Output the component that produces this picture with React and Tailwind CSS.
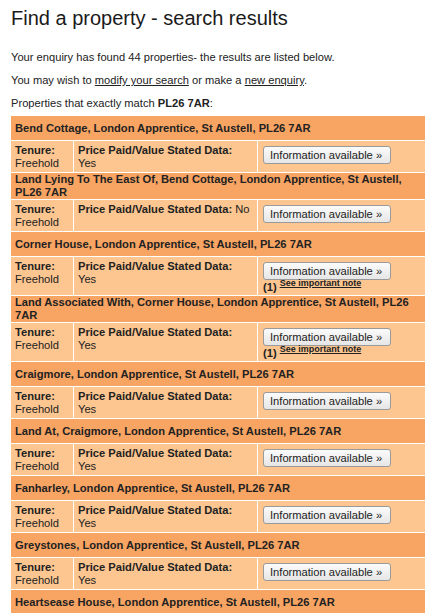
import React from 'react';

const results = [
  { address: 'Bend Cottage, London Apprentice, St Austell, PL26 7AR', price: 'Yes' },
  { address: 'Land Lying To The East Of, Bend Cottage, London Apprentice, St Austell, PL26 7AR', price: 'No', inline: true },
  { address: 'Corner House, London Apprentice, St Austell, PL26 7AR', price: 'Yes', note: true },
  { address: 'Land Associated With, Corner House, London Apprentice, St Austell, PL26 7AR', price: 'Yes', note: true },
  { address: 'Craigmore, London Apprentice, St Austell, PL26 7AR', price: 'Yes' },
  { address: 'Land At, Craigmore, London Apprentice, St Austell, PL26 7AR', price: 'Yes' },
  { address: 'Fanharley, London Apprentice, St Austell, PL26 7AR', price: 'Yes' },
  { address: 'Greystones, London Apprentice, St Austell, PL26 7AR', price: 'Yes' },
  { address: 'Heartsease House, London Apprentice, St Austell, PL26 7AR', price: 'Yes' },
];

const ResultRow = ({ item, last }) => (
  <>
    {/* Address header */}
    <div className="bg-[#f8a462] min-h-[24px] flex items-center pl-[4px] pr-[5px] font-bold leading-[13px]">
      <span>{item.address}</span>
    </div>
    {!last && (
      <div className="flex gap-px">
        <div className="w-[62px] shrink-0 bg-[#fdc58f] pl-[4px] pt-[3px] pb-[2px] leading-[13px]">
          <div className="font-bold">Tenure:</div>
          <div>Freehold</div>
        </div>
        <div className="w-[183px] shrink-0 bg-[#fdc58f] pl-[4px] pt-[3px] pb-[2px] leading-[13px]">
          <span className="font-bold">Price Paid/Value Stated Data:</span>
          {item.inline ? ' ' : <br />}
          {item.price}
        </div>
        <div className="flex-1 bg-[#fdc58f] pl-[5px] pt-[5px] flex flex-col items-start">
          <button className="h-[18px] w-[128px] px-[6px] border border-[#9a9a9a] rounded-[3px] bg-gradient-to-b from-[#fbfbfb] to-[#e6e6e6] text-[11.15px] leading-[14px] text-[#222] text-left whitespace-nowrap">
            Information available »
          </button>
          {item.note && (
            <div className="leading-[14px] whitespace-nowrap">
              <span className="font-bold">(1)</span>{' '}
              <a href="#" className="font-bold underline text-[9px] relative top-[-5px] text-[#222]">
                See important note
              </a>
            </div>
          )}
        </div>
      </div>
    )}
  </>
);

const App = () => {
  return (
    <div className="min-h-screen bg-white text-[#222] text-[11.15px] pl-[11px] pt-[7px] overflow-hidden" style={{ fontFamily: '"Liberation Sans", Arial, sans-serif' }}>
      <h1 className="text-[20px] leading-[23px] font-normal text-[#1a1a1a]">Find a property - search results</h1>

      <div className="mt-[20px] leading-[14px]">
        <p className="mb-[9px]">Your enquiry has found 44 properties- the results are listed below.</p>
        <p className="mb-[9px]">
          You may wish to <a href="#" className="underline">modify your search</a> or make a{' '}
          <a href="#" className="underline">new enquiry</a>.
        </p>
        <p>
          Properties that exactly match <span className="font-bold">PL26 7AR</span>:
        </p>
      </div>

      <div className="mt-[6px] w-[418px] flex flex-col gap-px">
        {results.map((item, i) => (
          <ResultRow key={item.address} item={item} last={i === results.length - 1} />
        ))}
      </div>
    </div>
  );
};

export default App;
